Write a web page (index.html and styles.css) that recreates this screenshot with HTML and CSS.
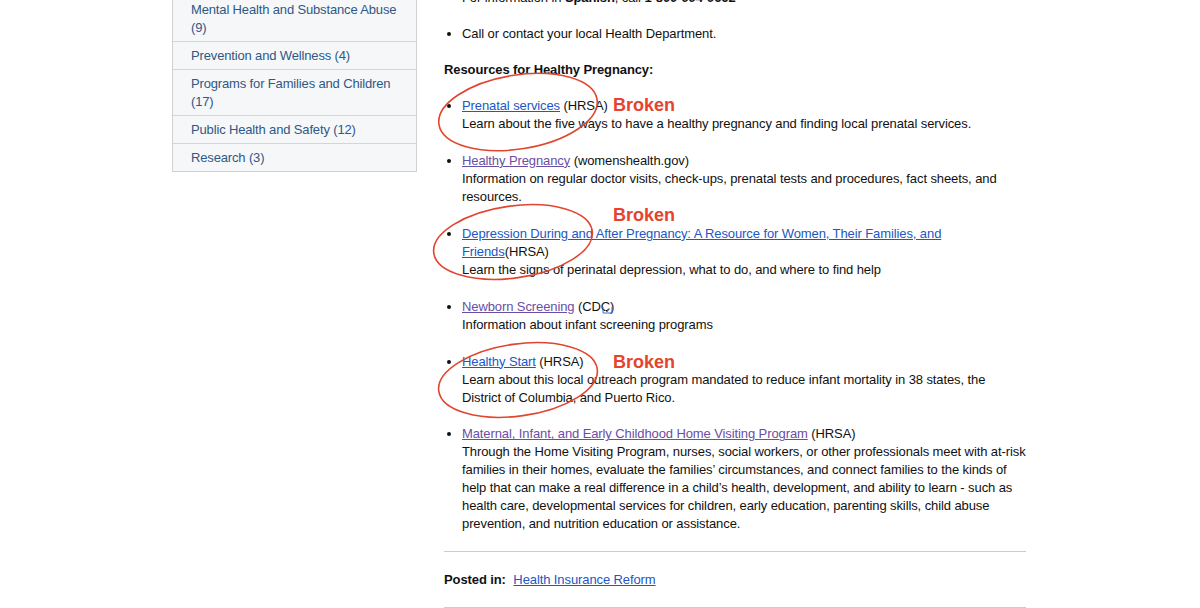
FILE: index.html
```html
<!DOCTYPE html>
<html>
<head>
<meta charset="utf-8">
<link rel="stylesheet" href="styles.css">
</head>
<body>
<div class="page">
  <aside class="sidebar">
    <ul class="cats">
      <li><a href="#">Mental Health and Substance Abuse (9)</a></li>
      <li><a href="#">Prevention and Wellness (4)</a></li>
      <li><a href="#">Programs for Families and Children (17)</a></li>
      <li><a href="#">Public Health and Safety (12)</a></li>
      <li><a href="#">Research (3)</a></li>
    </ul>
  </aside>
  <main class="main">
    <ul class="bullets top">
      <li>For information in <b>Spanish</b>, call <b>1-800-994-9662</b></li>
      <li>Call or contact your local Health Department.</li>
    </ul>
    <p class="heading">Resources for Healthy Pregnancy:</p>
    <ul class="bullets res">
      <li><a class="lk" href="#">Prenatal services</a> (HRSA)<br>Learn about the five ways to have a healthy pregnancy and finding local prenatal services.</li>
      <li><a class="lk visited" href="#">Healthy Pregnancy</a> (womenshealth.gov)<br>Information on regular doctor visits, check-ups, prenatal tests and procedures, fact sheets, and resources.</li>
      <li><a class="lk" href="#">Depression During and After Pregnancy: A Resource for Women, Their Families, and Friends</a>(HRSA)<br>Learn the signs of perinatal depression, what to do, and where to find help</li>
      <li><a class="lk visited" href="#">Newborn Screening</a> (CD<span class="ext">C<svg class="exticon" width="11" height="8" viewBox="0 0 11 8"><path d="M1 1 V7 H10 V1 M3 4 L5 6 L7 3" fill="none" stroke="#3b6fd0" stroke-width="1"/></svg></span>)<br>Information about infant screening programs</li>
      <li><a class="lk" href="#">Healthy Start</a> (HRSA)<br>Learn about this local outreach program mandated to reduce infant mortality in 38 states, the District of Columbia, and Puerto Rico.</li>
      <li><a class="lk visited" href="#">Maternal, Infant, and Early Childhood Home Visiting Program</a> (HRSA)<br>Through the Home Visiting Program, nurses, social workers, or other professionals meet with at-risk families in their homes, evaluate the families’ circumstances, and connect families to the kinds of help that can make a real difference in a child’s health, development, and ability to learn - such as health care, developmental services for children, early education, parenting skills, child abuse prevention, and nutrition education or assistance.</li>
    </ul>
    <div class="posted"><b>Posted in:</b> <a class="lk" href="#">Health Insurance Reform</a></div>
  </main>
</div>

<svg class="marks" width="1200" height="608" viewBox="0 0 1200 608">
  <ellipse cx="518" cy="112" rx="80" ry="37" transform="rotate(-9 518 112)" />
  <ellipse cx="513" cy="242" rx="80" ry="36" transform="rotate(-8 513 242)" />
  <ellipse cx="518" cy="380" rx="80" ry="36" transform="rotate(-8 518 380)" />
</svg>
<span class="broken b1">Broken</span>
<span class="broken b2">Broken</span>
<span class="broken b3">Broken</span>
</body>
</html>
```

FILE: styles.css
```css
html, body {
  margin: 0;
  padding: 0;
  background: #ffffff;
}
body {
  position: relative;
  width: 1200px;
  height: 608px;
  overflow: hidden;
  font-family: "Liberation Sans", Arial, Helvetica, sans-serif;
  font-size: 13px;
  line-height: 18px;
  letter-spacing: -0.1px;
  color: #111111;
}
.page {
  display: flex;
  align-items: flex-start;
  gap: 27px;
  padding-left: 172px;
  margin-top: -11px;
}
.sidebar {
  width: 245px;
  flex: none;
  margin-top: 6px;
}
.cats {
  list-style: none;
  margin: 0;
  padding: 0;
  background: #f6f7f8;
  border: 1px solid #cfd2d5;
  letter-spacing: -0.15px;
}
.cats li {
  padding: 5px 10px 4px 18px;
  border-top: 1px solid #d3d6d9;
}
.cats li:first-child {
  border-top: none;
}
.cats a {
  color: #2f5887;
  text-decoration: none;
}
.main {
  width: 582px;
  flex: none;
}
.bullets {
  margin: 0;
  padding-left: 18px;
}
.bullets li {
  margin-bottom: 18px;
}
.res li {
  margin-bottom: 18.9px;
}
.heading {
  font-weight: bold;
  margin: 0 0 18px 0;
}
.lk {
  color: #2157c4;
  text-decoration: underline;
}
.lk.visited {
  color: #6a4ea6;
}
.ext {
  position: relative;
}
.exticon {
  position: absolute;
  left: 1px;
  top: 7px;
}
.res {
  padding-bottom: 0;
  border-bottom: 1px solid #cccccc;
  margin-bottom: 0;
}
.res li:last-child {
  margin-bottom: 18px;
}
.posted {
  padding: 19px 0 18px 0;
  border-bottom: 1px solid #cccccc;
}
.posted b {
  margin-right: 4px;
}
.marks {
  position: absolute;
  left: 0;
  top: 0;
  pointer-events: none;
}
.marks ellipse {
  fill: none;
  stroke: #e2452f;
  stroke-width: 1.6;
}
.broken {
  position: absolute;
  left: 613px;
  font-family: "Liberation Sans", Arial, Helvetica, sans-serif;
  font-weight: bold;
  font-size: 18px;
  line-height: 20px;
  letter-spacing: 0;
  color: #e5432d;
}
.b1 { top: 95px; }
.b2 { top: 205px; }
.b3 { top: 352px; }
```
